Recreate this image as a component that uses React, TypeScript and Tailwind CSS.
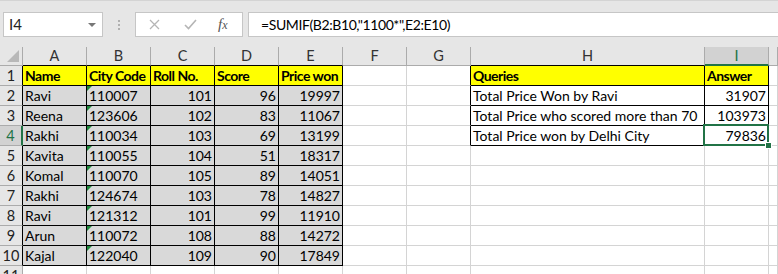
const colLetters = ["A", "B", "C", "D", "E", "F", "G", "H", "I", ""];

type Cell = { t: string; right?: boolean; bold?: boolean };

const header1 = ["Name", "City Code", "Roll No.", "Score", "Price won"];
const people: [string, string, number, number, number][] = [
  ["Ravi", "110007", 101, 96, 19997],
  ["Reena", "123606", 102, 83, 11067],
  ["Rakhi", "110034", 103, 69, 13199],
  ["Kavita", "110055", 104, 51, 18317],
  ["Komal", "110070", 105, 89, 14051],
  ["Rakhi", "124674", 103, 78, 14827],
  ["Ravi", "121312", 101, 99, 11910],
  ["Arun", "110072", 108, 88, 14272],
  ["Kajal", "122040", 109, 90, 17849],
];
const queries: [string, string][] = [
  ["Total Price Won by Ravi", "31907"],
  ["Total Price who scored more than 70", "103973"],
  ["Total Price won by Delhi City", "79836"],
];

function cellAt(r: number, c: number): Cell {
  if (r === 1 && c <= 4) return { t: header1[c], bold: true };
  if (r === 1 && c === 7) return { t: "Queries", bold: true };
  if (r === 1 && c === 8) return { t: "Answer", bold: true };
  if (r >= 2 && r <= 10 && c <= 4) {
    const p = people[r - 2];
    if (c === 0) return { t: p[0] };
    if (c === 1) return { t: p[1] };
    return { t: String(p[c]), right: true };
  }
  if (r >= 2 && r <= 4 && c === 7) return { t: queries[r - 2][0] };
  if (r >= 2 && r <= 4 && c === 8) return { t: queries[r - 2][1], right: true };
  return { t: "" };
}

function FormulaBar() {
  return (
    <div className="h-[47px] bg-[#e6e6e6] flex items-start pt-[11px] pl-[3px] border-t border-[#d4d4d4]">
      <div className="relative w-[100px] h-[25px] bg-white border border-[#c6c6c6] flex items-center pl-[5px] text-[15px] text-[#222]">
        I4
        <div className="absolute right-[6px] top-[10px] w-0 h-0 border-l-[4px] border-r-[4px] border-t-[4px] border-l-transparent border-r-transparent border-t-[#777]" />
      </div>
      <div className="w-[32px] h-[25px] flex flex-col items-center justify-center gap-[2px]">
        <div className="w-[2px] h-[2px] bg-[#b0b0b0]" />
        <div className="w-[2px] h-[2px] bg-[#b0b0b0]" />
        <div className="w-[2px] h-[2px] bg-[#b0b0b0]" />
      </div>
      <div className="w-[108px] h-[25px] bg-white border border-[#c6c6c6] flex items-center">
        <svg className="ml-[13px]" width="11" height="11" viewBox="0 0 11 11">
          <path d="M1 1 L10 10 M10 1 L1 10" stroke="#b5b5b5" strokeWidth="1.3" />
        </svg>
        <svg className="ml-[24px]" width="13" height="11" viewBox="0 0 13 11">
          <path d="M1 6 L4.5 9.5 L12 1" stroke="#b5b5b5" strokeWidth="1.6" fill="none" />
        </svg>
        <span className="ml-[21px] italic text-[15px] text-[#555]" style={{ fontFamily: '"Liberation Serif", serif' }}>
          f<span className="text-[12px]">x</span>
        </span>
      </div>
      <div className="ml-[5px] flex-1 h-[25px] bg-white border-y border-l border-[#c6c6c6] flex items-center pl-[12px] text-[14px] tracking-[-0.4px] text-black">
        =SUMIF(B2:B10,"1100*",E2:E10)
      </div>
    </div>
  );
}

export default function App() {
  const rows = Array.from({ length: 11 }, (_, i) => i + 1);
  return (
    <div
      className="w-[778px] h-[274px] overflow-hidden bg-white"
      style={{ fontFamily: 'Lato, "Liberation Sans", sans-serif' }}
    >
      <FormulaBar />
      <div className="grid grid-cols-[23px_64px_64px_64px_64px_64px_64px_64px_234px_64px_1fr] grid-rows-[19px] auto-rows-[20px]">
        {/* corner */}
        <div className="bg-[#e6e6e6] border-r border-b border-[#ababab] relative">
          <svg className="absolute right-[3px] bottom-[3px]" width="12" height="12" viewBox="0 0 12 12">
            <path d="M12 0 L12 12 L0 12 Z" fill="#b8b8b8" />
          </svg>
        </div>
        {colLetters.map((l, c) => (
          <div
            key={l + c}
            className={
              "flex items-center justify-center text-[14.5px] " +
              (c === 8
                ? "bg-[#d2d2d2] text-[#217346] border-r border-r-[#ababab] border-b-2 border-b-[#217346]"
                : c <= 4 || c === 7
                ? "bg-[#e6e6e6] text-[#333] border-r border-r-[#ababab] border-b border-b-black"
                : "bg-[#e6e6e6] text-[#333] border-r border-r-[#ababab] border-b border-b-[#ababab]")
            }
          >
            {l}
          </div>
        ))}
        {rows.map((r) => (
          <>
            <div
              key={"h" + r}
              className={
                "flex items-center justify-center text-[14.5px] border-b border-b-[#ababab] " +
                (r === 4
                  ? "bg-[#d2d2d2] text-[#217346] border-r-2 border-r-[#217346]"
                  : r <= 10
                  ? "bg-[#e6e6e6] text-[#222] border-r border-r-black"
                  : "bg-[#e6e6e6] text-[#222] border-r border-r-[#ababab]")
              }
            >
              {r}
            </div>
            {colLetters.map((_, c) => {
              const cell = cellAt(r, c);
              const t1 = c <= 4 && r <= 10;
              const t2 = (c === 7 || c === 8) && r <= 4;
              const blackR = t1 || t2 || (c === 6 && r <= 4);
              const blackB = t1 || t2;
              const yellow = r === 1 && (c <= 4 || c === 7 || c === 8);
              const gray = t1 && r >= 2;
              return (
                <div
                  key={r + "-" + c}
                  className={
                    "relative flex items-end pb-[1px] px-[2px] text-[14px] leading-[17px] text-black whitespace-nowrap " +
                    (blackR ? "border-r border-r-black " : "border-r border-r-[#d4d4d4] ") +
                    (blackB ? "border-b border-b-black " : "border-b border-b-[#d4d4d4] ") +
                    (yellow ? "bg-[#ffff00] " : gray ? "bg-[#d9d9d9] " : "bg-white ") +
                    (cell.right ? "justify-end " : "justify-start ") +
                    (cell.bold ? "font-bold tracking-[-0.5px]" : "")
                  }
                >
                  {c === 1 && r >= 2 && r <= 10 && (
                    <div className="absolute left-0 top-0 w-0 h-0 border-t-[5px] border-t-[#1e8a3c] border-r-[5px] border-r-transparent" />
                  )}
                  {cell.t}
                  {r === 4 && c === 8 && (
                    <>
                      <div className="absolute z-10 -left-[2px] -top-[2px] -right-[1px] -bottom-[1px] border-2 border-[#217346]" />
                      <div className="absolute z-20 -right-[4px] -bottom-[4px] w-[7px] h-[7px] bg-[#217346] border border-white" />
                    </>
                  )}
                </div>
              );
            })}
          </>
        ))}
      </div>
    </div>
  );
}
